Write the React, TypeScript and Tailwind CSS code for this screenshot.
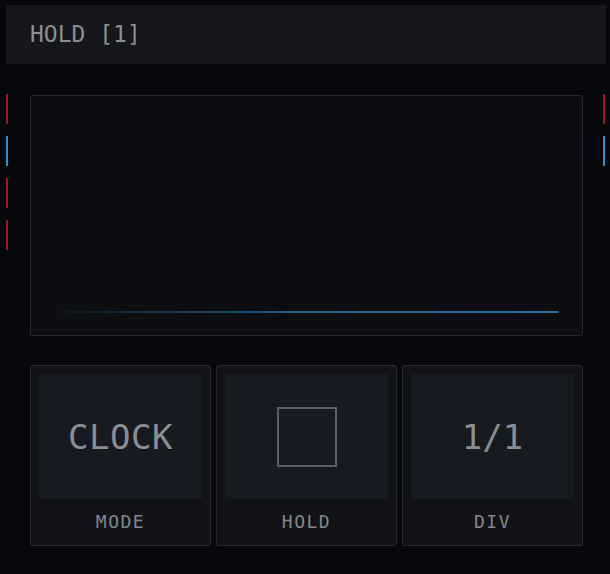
import React from "react";

// ── Port markers on the sides of the scope ──────────────────────────────────

type Port = "red" | "blue";

const PORT_COLOR: Record<Port, string> = {
  red: "bg-[#a3141f]",
  blue: "bg-[#2f8fd0]",
};

function PortColumn({ ports }: { ports: Port[] }) {
  return (
    <div className="flex flex-col gap-[12px] w-[2px] shrink-0">
      {ports.map((p, i) => (
        <div key={i} className={`w-[2px] h-[30px] ${PORT_COLOR[p]}`} />
      ))}
    </div>
  );
}

// ── Scope display ───────────────────────────────────────────────────────────

function Scope() {
  return (
    <div className="w-[553px] h-[241px] shrink-0 rounded-[3px] border border-[#25282e] bg-[#0c0e12] flex flex-col justify-end pb-[22px] pl-[10px] pr-[24px]">
      <div className="h-[2px] w-full bg-gradient-to-r from-transparent via-[#1c5f8e] to-[#2273ad]" />
    </div>
  );
}

// ── Control tiles ───────────────────────────────────────────────────────────

function Tile({ label, children }: { label: string; children: React.ReactNode }) {
  return (
    <div className="w-[181px] h-[181px] rounded-[3px] border border-[#262930] bg-[#111318] flex flex-col p-[8px] pb-0">
      <div className="h-[125px] bg-[#171a20] flex items-center justify-center">
        {children}
      </div>
      <div className="flex-1 flex items-center justify-center text-[18px] tracking-[1.5px] text-[#83868c] pb-[1px]">
        {label}
      </div>
    </div>
  );
}

export default function App() {
  return (
    <div
      className="w-[610px] h-[574px] bg-[#07080b] flex flex-col pl-[6px] pr-[4px] pt-[5px]"
      style={{ fontFamily: '"DejaVu Sans Mono", "Liberation Mono", monospace' }}
    >
      {/* Header */}
      <div className="h-[59px] bg-[#15171c] flex items-center pl-[24px] text-[23px] text-[#8b8e93] shrink-0">
        HOLD [1]
      </div>

      {/* Scope row */}
      <div className="flex items-start mt-[30px]">
        <PortColumn ports={["red", "blue", "red", "red"]} />
        <div className="ml-[22px] mt-[1px]">
          <Scope />
        </div>
        <div className="ml-[20px]">
          <PortColumn ports={["red", "blue"]} />
        </div>
      </div>

      {/* Controls */}
      <div className="flex gap-[5px] ml-[24px] mt-[29px]">
        <Tile label="MODE">
          <span className="text-[34px] text-[#8a8d92] tracking-[0.5px] pt-[2px]">CLOCK</span>
        </Tile>
        <Tile label="HOLD">
          <div className="w-[60px] h-[60px] border-2 border-[#5b5e64]" />
        </Tile>
        <Tile label="DIV">
          <span className="text-[34px] text-[#8a8d92] pt-[2px]">1/1</span>
        </Tile>
      </div>
    </div>
  );
}
